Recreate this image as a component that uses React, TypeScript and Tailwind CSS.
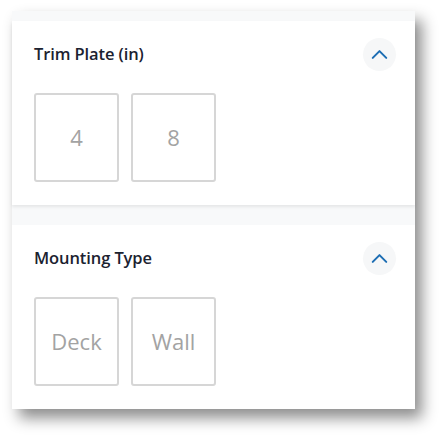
import { ChevronUp } from "lucide-react";

type Section = { title: string; options: string[] };

const sections: Section[] = [
  { title: "Trim Plate (in)", options: ["4", "8"] },
  { title: "Mounting Type", options: ["Deck", "Wall"] },
];

function FilterSection({ title, options, raised }: Section & { raised?: boolean }) {
  return (
    <div
      className={[
        "bg-white px-[22px] pt-[17px] pb-[23px]",
        raised ? "shadow-[0_2px_3px_rgba(0,0,0,0.08)]" : "",
      ].join(" ")}
    >
      <div className="flex h-[33px] items-center justify-between">
        <h3 className="text-[16.5px] font-semibold tracking-[-0.1px] text-[#1b2230]">{title}</h3>
        <button className="mr-[-3px] flex h-[33px] w-[33px] items-center justify-center rounded-full bg-[#f6f7f8] text-[#1c6db3]">
          <ChevronUp size={27} strokeWidth={1.8} />
        </button>
      </div>
      <div className="mt-[22px] flex gap-[12px]">
        {options.map((o) => (
          <div
            key={o}
            className="flex h-[89px] w-[85px] items-center justify-center rounded-[3px] border-2 border-[#d6d6d6] text-[22px] text-[#a3a3a3]"
          >
            {o}
          </div>
        ))}
      </div>
    </div>
  );
}

export default function App() {
  return (
    <div
      className="h-[435px] w-[446px] bg-white pl-[12px] pt-[11px]"
      style={{ fontFamily: '"Open Sans", sans-serif' }}
    >
      <div className="w-[403px] bg-[#f8f9fa] pt-[10px] shadow-[7px_9px_14px_rgba(0,0,0,0.45)]">
        <FilterSection {...sections[0]} raised />
        <div className="h-[20px]" />
        <FilterSection {...sections[1]} />
      </div>
    </div>
  );
}
